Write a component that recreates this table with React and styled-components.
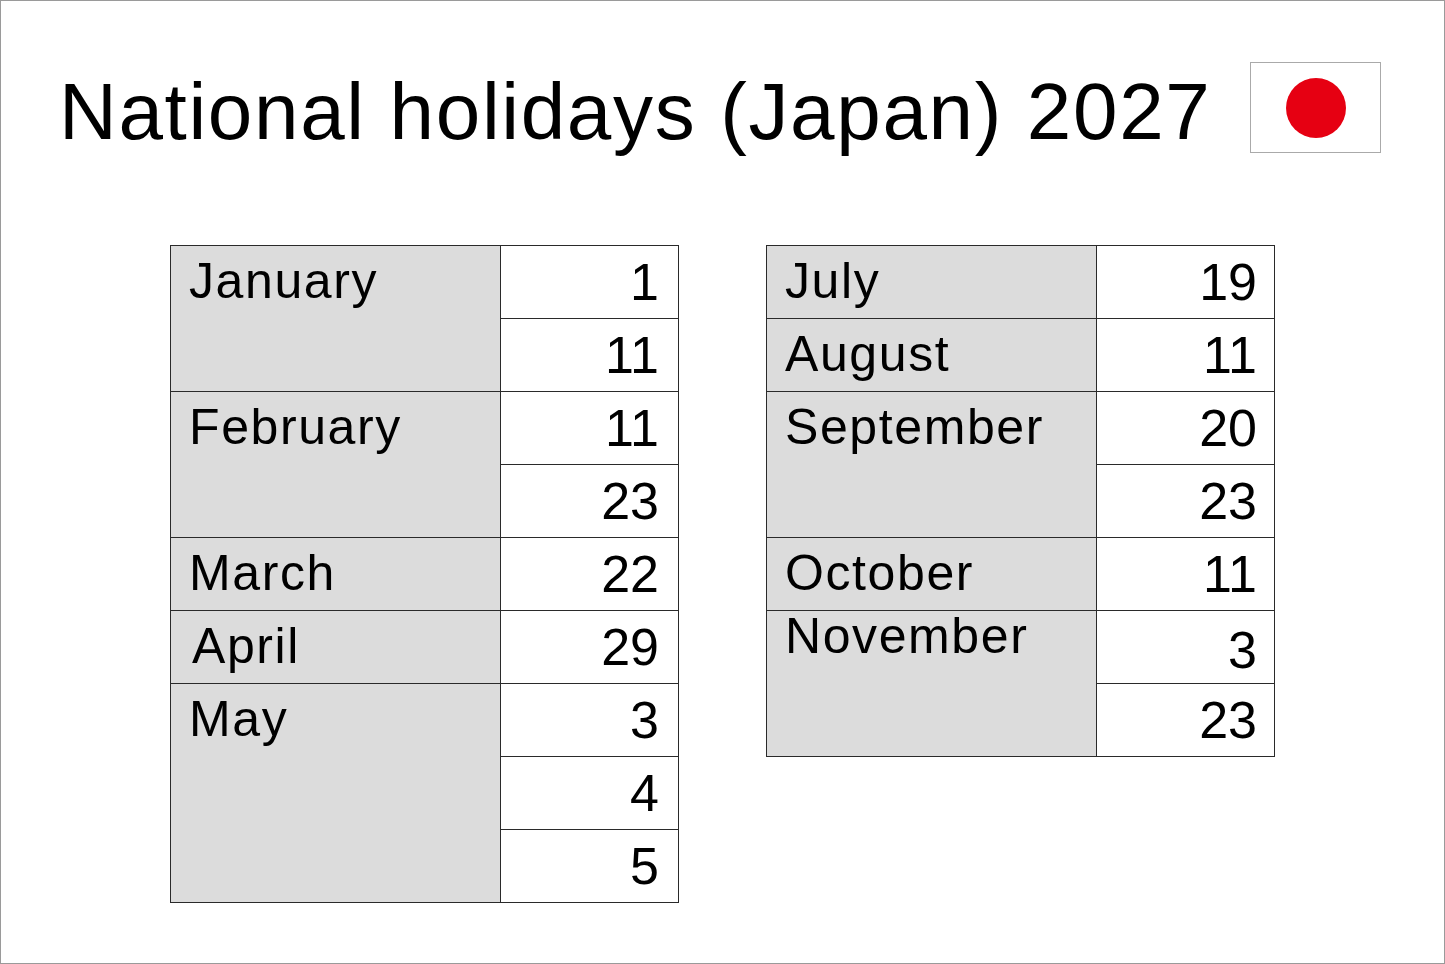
import React from "react";
import styled, { createGlobalStyle } from "styled-components";

const Global = createGlobalStyle`
  html, body { margin: 0; padding: 0; background: #fff; }
  body { font-family: "Liberation Sans", Arial, sans-serif; color: #000; }
`;

const Page = styled.div`
  box-sizing: border-box;
  width: 1445px;
  height: 964px;
  border: 1px solid #9a9a9a;
  background: #fff;
  display: flex;
  flex-direction: column;
`;

const Header = styled.header`
  display: flex;
  align-items: flex-start;
  justify-content: space-between;
  padding: 61px 63px 0 58px;
`;

const Title = styled.h1`
  margin: 10px 0 0;
  font-family: "Liberation Sans", Arial, sans-serif;
  font-weight: 400;
  font-size: 80px;
  line-height: 80px;
  letter-spacing: 1.65px;
  white-space: nowrap;
`;

const Flag = styled.div`
  box-sizing: border-box;
  width: 131px;
  height: 91px;
  border: 1px solid #aaa;
  background: #fff;
  display: flex;
  align-items: center;
  justify-content: center;
`;

const Sun = styled.div`
  width: 60px;
  height: 60px;
  border-radius: 50%;
  background: #e60012;
`;

const Tables = styled.main`
  display: flex;
  align-items: flex-start;
  gap: 87px;
  padding: 92px 0 0 169px;
`;

const Table = styled.table`
  border-collapse: collapse;
  table-layout: fixed;
  width: 509px;
  font-family: "Liberation Sans", Arial, sans-serif;
`;

const Row = styled.tr`
  height: 72px;
`;

const Month = styled.td`
  box-sizing: border-box;
  width: 330px;
  border: 1px solid #2a2a2a;
  background: #dcdcdc;
  vertical-align: top;
  padding: 0 0 0 ${(p) => 18 + (p.$indent || 0)}px;
  font-size: 50px;
  line-height: ${(p) => (p.$raise ? 50 : 71)}px;
  letter-spacing: 1.6px;
  white-space: nowrap;
`;

const Day = styled.td`
  box-sizing: border-box;
  border: 1px solid #2a2a2a;
  background: #fff;
  text-align: right;
  vertical-align: top;
  padding: ${(p) => p.$drop || 0}px ${(p) => p.$pad || 19}px 0 0;
  font-size: 52px;
  line-height: ${(p) => 72 - (p.$drop || 0)}px;
  height: 72px;
`;

const left = [
  { month: "January", days: ["1", "11"] },
  { month: "February", days: ["11", "23"] },
  { month: "March", days: ["22"] },
  { month: "April", days: ["29"], indent: 3 },
  { month: "May", days: ["3", "4", "5"] },
];

const right = [
  { month: "July", days: ["19"] },
  { month: "August", days: ["11"] },
  { month: "September", days: ["20", "23"] },
  { month: "October", days: ["11"] },
  { month: "November", days: ["3", "23"], raise: true, drop: [6, 0] },
];

function HolidayTable({ data, dayPad }) {
  return (
    <Table>
      <tbody>
        {data.flatMap((m) =>
          m.days.map((d, i) => (
            <Row key={m.month + d + i}>
              {i === 0 && (
                <Month rowSpan={m.days.length} $indent={m.indent} $raise={m.raise}>
                  {m.month}
                </Month>
              )}
              <Day $drop={m.drop ? m.drop[i] : 0} $pad={dayPad}>
                {d}
              </Day>
            </Row>
          ))
        )}
      </tbody>
    </Table>
  );
}

export default function App() {
  return (
    <>
      <Global />
      <Page>
        <Header>
          <Title>National holidays (Japan) 2027</Title>
          <Flag>
            <Sun />
          </Flag>
        </Header>
        <Tables>
          <HolidayTable data={left} />
          <HolidayTable data={right} dayPad={17} />
        </Tables>
      </Page>
    </>
  );
}
